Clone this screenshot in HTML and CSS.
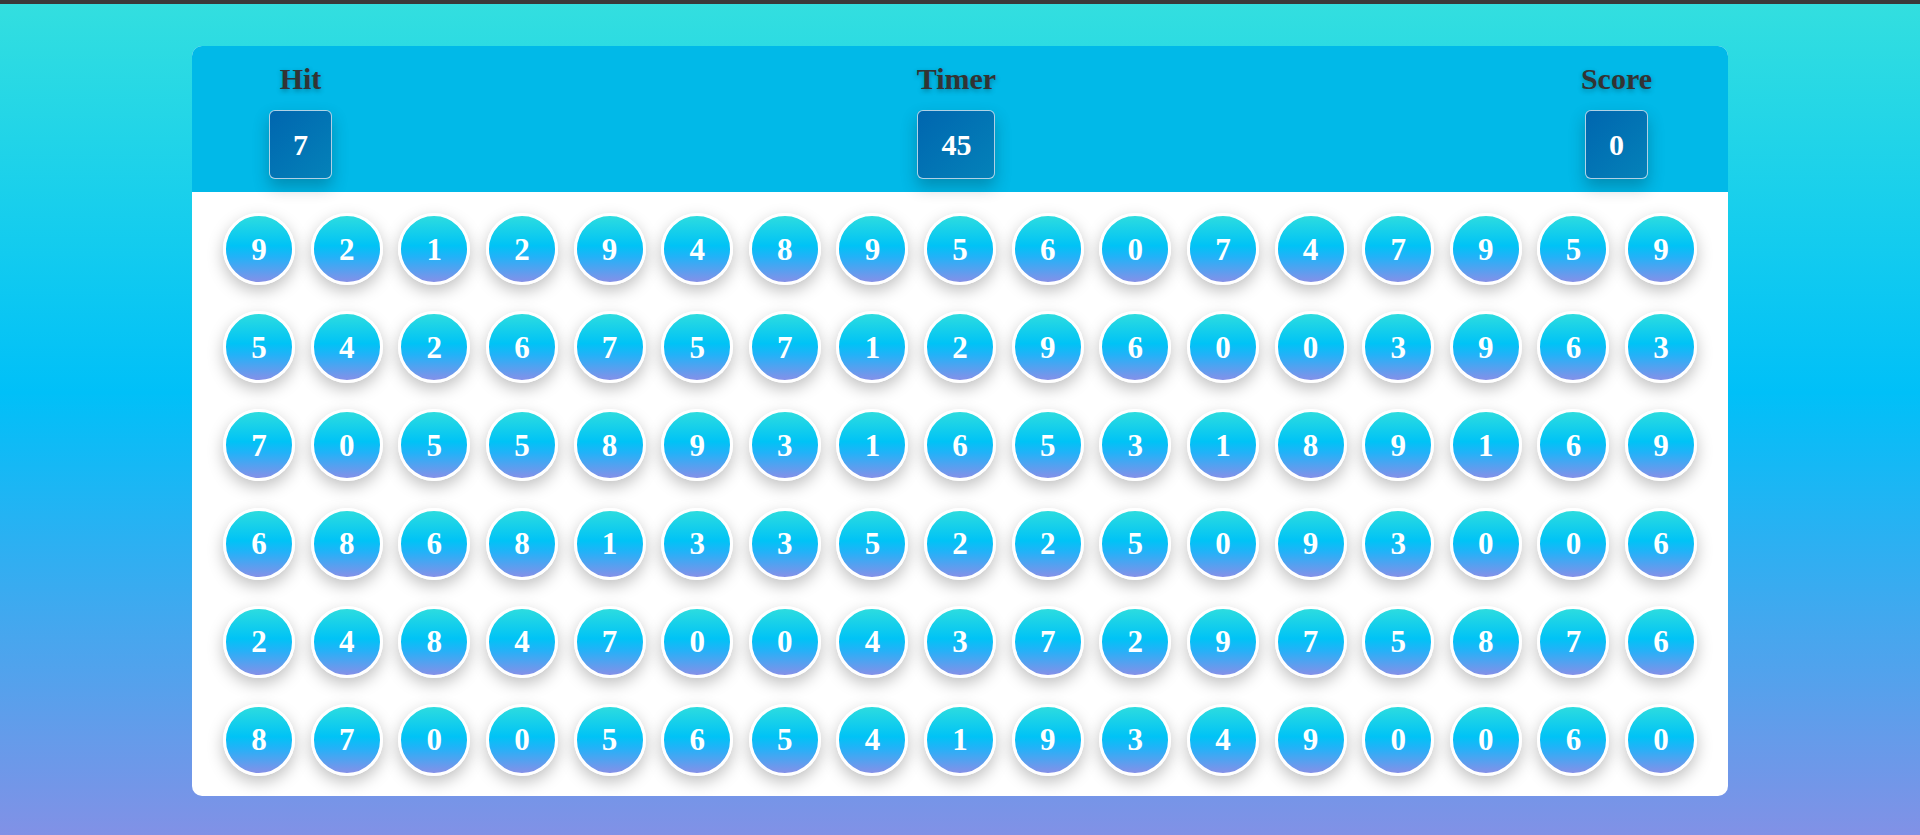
FILE: index.html
```html
<!DOCTYPE html>
<html lang="en">
<head>
<meta charset="utf-8">
<title>Bubble Game</title>
<link rel="stylesheet" href="styles.css">
</head>
<body>
<main class="panel">
  <header class="top">
    <div class="stat">
      <h2 class="stat-label">Hit</h2>
      <div class="stat-box">7</div>
    </div>
    <div class="stat">
      <h2 class="stat-label">Timer</h2>
      <div class="stat-box">45</div>
    </div>
    <div class="stat">
      <h2 class="stat-label">Score</h2>
      <div class="stat-box">0</div>
    </div>
  </header>
  <section class="board" id="board"></section>
</main>
<script src="script.js"></script>
</body>
</html>
```
FILE: script.js
```js
var rows = [
  "92129489560747959",
  "54267571296003963",
  "70558931653189169",
  "68681335225093006",
  "24847004372975876",
  "87005654193490060"
];
var board = document.getElementById("board");
var html = "";
rows.forEach(function (r) {
  for (var i = 0; i < r.length; i++) {
    html += '<div class="bubble">' + r[i] + '</div>';
  }
});
board.innerHTML = html;
```
FILE: styles.css
```css
* { box-sizing: border-box; }
html, body { margin: 0; padding: 0; }
body {
  min-height: 100vh;
  border-top: 4px solid #3a3a3a;
  background: linear-gradient(to bottom, #33dfdf 0%, #00c0f8 47%, #8191e6 100%);
  font-family: "Liberation Serif", "Times New Roman", serif;
  overflow: hidden;
}
.panel {
  width: 1536px;
  margin: 42px auto 0;
  background: #fff;
  border-radius: 10px;
  overflow: hidden;
}
.top {
  background: #01b9e8;
  display: flex;
  justify-content: space-between;
  align-items: flex-start;
  padding: 16px 76px 13px 77px;
}
.stat {
  display: flex;
  flex-direction: column;
  align-items: center;
  gap: 14px;
}
.stat-label {
  margin: 0;
  font-size: 30px;
  line-height: 34px;
  font-weight: 700;
  color: #333;
  text-shadow: 0 2px 5px rgba(0, 0, 0, 0.3);
}
.stat-box {
  font-size: 30px;
  line-height: 34px;
  font-weight: 700;
  color: #fff;
  padding: 17px 23px 16px;
  border: 1px solid rgba(235, 240, 245, 0.75);
  border-radius: 6px;
  background: linear-gradient(135deg, #0066af 0%, #0482b9 100%);
  box-shadow: 0 8px 16px rgba(0, 40, 60, 0.3);
}
.board {
  display: grid;
  grid-template-columns: repeat(17, 72px);
  justify-content: space-between;
  row-gap: 26.2px;
  padding: 21px 31px 20px;
}
.bubble {
  width: 72px;
  height: 72px;
  border-radius: 50%;
  border: 3px solid #fff;
  background: linear-gradient(to bottom, #2ddcdf 0%, #00c3f6 45%, #22b2f8 62%, #8590e8 100%);
  box-shadow: 0 6px 16px rgba(0, 0, 0, 0.25);
  display: flex;
  align-items: center;
  justify-content: center;
  color: #fff;
  font-size: 31px;
  font-weight: 700;
  line-height: 1;
}
```
